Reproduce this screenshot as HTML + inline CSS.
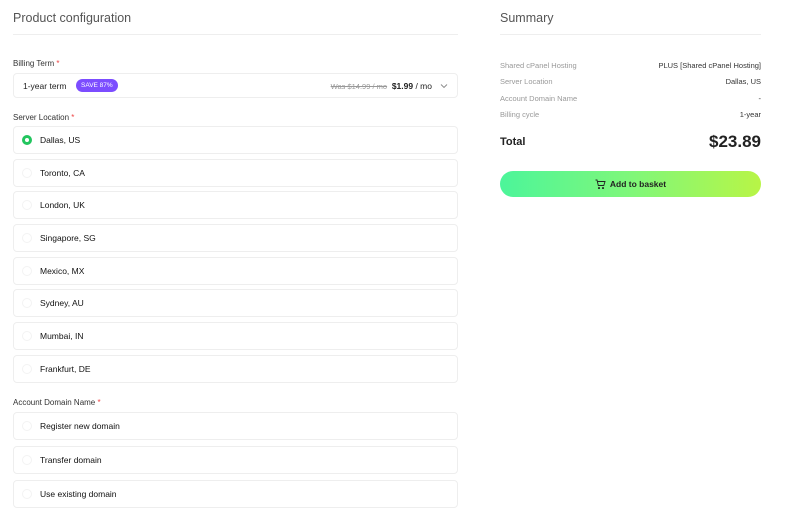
<!DOCTYPE html>
<html><head><meta charset="utf-8"><style>
*,*::before,*::after{box-sizing:border-box;margin:0;padding:0}
body{width:800px;height:518px;background:#fff;font-family:"Liberation Sans",sans-serif;color:#222;position:relative;overflow:hidden}
.abs{position:absolute}
.h{font-size:12.5px;color:#555}
.line{height:1px;background:#eee}
.lbl{font-size:8px;color:#333}
.lbl i{color:#e44;font-style:normal}
.box{position:absolute;left:13px;width:445px;height:28px;border:1px solid #eee;border-radius:4px;font-size:8.5px;color:#111;padding-left:26px;line-height:26px}
.box:before{content:"";position:absolute;left:8px;top:8px;width:10px;height:10px;border-radius:50%;border:1px solid #f3f3f3}
.box.sel:before{border:3px solid #22c55e;background:#fff}
.row{position:absolute;left:500px;width:261px;font-size:7.5px;color:#999;display:flex;justify-content:space-between}
.row span:last-child{color:#333}
</style></head><body>
<div class="abs h" style="left:13px;top:11px">Product configuration</div>
<div class="abs line" style="left:13px;top:34px;width:445px"></div>
<div class="abs h" style="left:500px;top:11px">Summary</div>
<div class="abs line" style="left:500px;top:34px;width:261px"></div>

<div class="abs lbl" style="left:13px;top:59px">Billing Term <i>*</i></div>
<div class="abs" style="left:13px;top:73px;width:445px;height:25px;border:1px solid #eee;border-radius:4px;font-size:8.5px">
<span class="abs" style="left:9px;top:7px">1-year term</span>
<span class="abs" style="left:62px;top:5px;background:#7c4dff;color:#fff;font-size:6.5px;border-radius:7px;padding:2px 5px;height:13px;line-height:9px">SAVE 87%</span>
<span class="abs" style="right:25px;top:7px;white-space:nowrap"><s style="color:#999;font-size:7.5px">Was $14.99 / mo</s>&nbsp; <b>$1.99</b> / mo</span>
<svg class="abs" style="right:9px;top:9px" width="8" height="6" viewBox="0 0 8 6"><path d="M1 1.5 4 4.5 7 1.5" fill="none" stroke="#888" stroke-width="0.9"/></svg>
</div>

<div class="abs lbl" style="left:13px;top:113px">Server Location <i>*</i></div>
<div class="box sel" style="top:126px">Dallas, US</div>
<div class="box" style="top:159px">Toronto, CA</div>
<div class="box" style="top:191px">London, UK</div>
<div class="box" style="top:224px">Singapore, SG</div>
<div class="box" style="top:257px">Mexico, MX</div>
<div class="box" style="top:289px">Sydney, AU</div>
<div class="box" style="top:322px">Mumbai, IN</div>
<div class="box" style="top:355px">Frankfurt, DE</div>

<div class="abs lbl" style="left:13px;top:398px">Account Domain Name <i>*</i></div>
<div class="box" style="top:412px">Register new domain</div>
<div class="box" style="top:446px">Transfer domain</div>
<div class="box" style="top:480px">Use existing domain</div>

<div class="row" style="top:61px"><span>Shared cPanel Hosting</span><span>PLUS [Shared cPanel Hosting]</span></div>
<div class="row" style="top:77px"><span>Server Location</span><span>Dallas, US</span></div>
<div class="row" style="top:94px"><span>Account Domain Name</span><span>-</span></div>
<div class="row" style="top:110px"><span>Billing cycle</span><span>1-year</span></div>
<div class="abs" style="left:500px;top:136px;font-size:11px;font-weight:bold;color:#222">Total</div>
<div class="abs" style="left:600px;width:161px;text-align:right;top:132px;font-size:17px;font-weight:bold;color:#222">$23.89</div>
<div class="abs" style="left:500px;top:171px;width:261px;height:26px;border-radius:13px;background:linear-gradient(90deg,#4cf59a,#7ff77a 50%,#b8f546);font-size:8.5px;font-weight:bold;color:#222;text-align:center;line-height:26px">
<svg style="vertical-align:-2px;margin-right:4px" width="11" height="10" viewBox="0 0 11 10"><path d="M0.5 1H2l1.3 5.5h5.5L10 2.5H2.6M4 8.5a.6.6 0 1 0 .01 0M8 8.5a.6.6 0 1 0 .01 0" fill="none" stroke="#222" stroke-width="0.9"/></svg>Add to basket</div>
</body></html>
